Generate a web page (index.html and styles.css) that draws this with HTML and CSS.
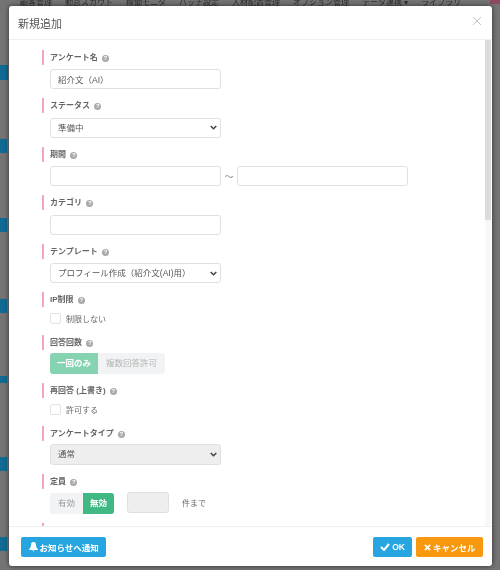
FILE: index.html
```html
<!doctype html>
<html>
<head>
    <meta charset="UTF-8">
    <title>新規追加</title>
    <link rel="stylesheet" href="styles.css">
</head>
<body>
<div class="page">
    <div class="nav">
        <span>顧客管理</span><span>勤怠スカウト</span><span>稼働モニタ</span><span>バッチ設定</span><span>人材配置管理</span><span>オプション管理</span><span>データ連携 ▾</span><span>ライブラリ</span>
    </div>
    <i class="tab"></i>
    <i class="bit bit-big"></i>
    <i class="bit bit-2"></i>
    <i class="bit bit-3"></i>
    <i class="bit bit-4"></i>
    <i class="bit bit-5"></i>
    <i class="bit bit-6"></i>
    <i class="bit bit-7"></i>
    <div class="modal">
        <div class="modal-head">
            <h4>新規追加</h4>
            <svg class="close" width="10" height="10" viewBox="0 0 10 10"><path d="M1 1l8 8M9 1l-8 8"/></svg>
        </div>
        <div class="modal-body">
            <form class="form">
                <div class="field">
                    <div class="label">アンケート名 <i class="help">?</i></div>
                    <input class="input" type="text" value="紹介文（AI）">
                </div>
                <div class="field">
                    <div class="label">ステータス <i class="help">?</i></div>
                    <select class="input"><option>準備中</option></select>
                </div>
                <div class="field">
                    <div class="label">期間 <i class="help">?</i></div>
                    <div class="range">
                        <input class="input" type="text">
                        <span class="tilde">～</span>
                        <input class="input" type="text">
                    </div>
                </div>
                <div class="field">
                    <div class="label">カテゴリ <i class="help">?</i></div>
                    <input class="input" type="text">
                </div>
                <div class="field">
                    <div class="label">テンプレート <i class="help">?</i></div>
                    <select class="input"><option>プロフィール作成（紹介文(AI)用）</option></select>
                </div>
                <div class="field">
                    <div class="label">IP制限 <i class="help">?</i></div>
                    <label class="check"><span class="box"></span>制限しない</label>
                </div>
                <div class="field">
                    <div class="label">回答回数 <i class="help">?</i></div>
                    <div class="toggle faded">
                        <span class="on">一回のみ</span><span>複数回答許可</span>
                    </div>
                </div>
                <div class="field">
                    <div class="label">再回答 (上書き) <i class="help">?</i></div>
                    <label class="check"><span class="box"></span>許可する</label>
                </div>
                <div class="field">
                    <div class="label">アンケートタイプ <i class="help">?</i></div>
                    <select class="input locked"><option>通常</option></select>
                </div>
                <div class="field">
                    <div class="label">定員 <i class="help">?</i></div>
                    <div class="limit">
                        <div class="toggle">
                            <span>有効</span><span class="on">無効</span>
                        </div>
                        <input class="input count locked" type="text">
                        <span class="unit">件まで</span>
                    </div>
                </div>
                <div class="field">
                    <div class="label"></div>
                </div>
            </form>
            <div class="scrollbar"></div>
        </div>
        <div class="modal-foot">
            <button class="btn blue" type="button">
                <svg width="9" height="10" viewBox="0 0 9 10"><path d="M4.5 0C2.8 0 2 1.300 2 3c0 2.500-1.300 3.500-2 4.300v.7h9v-.7C8.300 6.500 7 5.500 7 3 7 1.300 6.200 0 4.500 0zM3.300 8.600a1.300 1.300 0 0 0 2.400 0z"/></svg>
                お知らせへ通知
            </button>
            <div class="foot-right">
                <button class="btn blue" type="button">
                    <svg width="10" height="8" viewBox="0 0 10 8"><path class="tick" d="M1 4l3 3 5-6"/></svg>
                    OK
                </button>
                <button class="btn orange" type="button">
                    <svg width="7" height="7" viewBox="0 0 8 8"><path class="tick" d="M1 1l6 6M7 1L1 7"/></svg>
                    キャンセル
                </button>
            </div>
        </div>
    </div>
</div>
</body>
</html>
```

FILE: styles.css
```css
* {
    box-sizing: border-box;
}

html, body {
    margin: 0;
    height: 570px;
    overflow: hidden;
}

body {
    background: #747474;
    font-family: "Liberation Sans", "Noto Sans CJK JP", sans-serif;
    font-size: 8px;
    color: #555;
}

.page {
    position: relative;
    height: 570px;
    padding-left: 9px;
    overflow: hidden;
    filter: blur(.5px);
}

.nav {
    height: 6px;
    overflow: hidden;
    display: flex;
    gap: 13px;
    padding-left: 11px;
    color: #2e2e2e;
    font-size: 8px;
    line-height: 5px;
    white-space: nowrap;
}

/* page behind the dialog */
.tab {
    position: absolute;
    top: 0;
    right: 0;
    width: 10px;
    height: 4px;
    background: #8a4a62;
}

.bit {
    position: absolute;
    left: 0;
    width: 7px;
    height: 14px;
    background: #0f6a94;
}

.bit-big { top: 65px; height: 15px; width: 8px; }
.bit-2 { top: 139px; }
.bit-3 { top: 218px; }
.bit-4 { top: 299px; }
.bit-5 { top: 376px; height: 7px; }
.bit-6 { top: 457px; }
.bit-7 { top: 537px; }

.modal {
    position: relative;
    width: 483px;
    height: 560px;
    background: #fff;
    border-radius: 3px;
    box-shadow: 0 0 5px rgba(0, 0, 0, .6);
    display: flex;
    flex-direction: column;
}

.modal-head {
    flex: none;
    height: 34px;
    border-bottom: 1px solid #f0f0f0;
    display: flex;
    align-items: center;
    justify-content: space-between;
    padding: 0 10px 0 9px;
}

.modal-head h4 {
    margin: 0;
    font-size: 11px;
    font-weight: 400;
    color: #555;
}

.close {
    fill: none;
    stroke: #c4c4c4;
    stroke-width: 1;
    margin-bottom: 3px;
}

.modal-body {
    flex: 1;
    min-height: 0;
    overflow: hidden;
    display: flex;
    justify-content: space-between;
}

.form {
    padding: 9.500px 0 0 33px;
}

.field {
    margin-bottom: 9px;
}

.label {
    height: 15px;
    border-left: 2px solid #f4a6c0;
    padding-left: 6px;
    margin-bottom: 4.500px;
    font-size: 8px;
    font-weight: 700;
    line-height: 15px;
    color: #666;
}

.help {
    display: inline-block;
    width: 7px;
    height: 7px;
    margin-left: 2px;
    border-radius: 50%;
    background: #a9a9a9;
    color: #fff;
    font-size: 6px;
    font-style: normal;
    line-height: 7px;
    text-align: center;
    vertical-align: 0;
}

.input {
    display: block;
    width: 171px;
    height: 20px;
    margin-left: 8px;
    padding: 0 7px;
    border: 1px solid #e0e0e0;
    border-radius: 3px;
    background-color: #fff;
    font-family: inherit;
    font-size: 8.500px;
    color: #555;
}

select.input {
    -webkit-appearance: none;
    appearance: none;
    background-image: url("data:image/svg+xml,%3Csvg xmlns='http://www.w3.org/2000/svg' width='7' height='5' viewBox='0 0 7 5'%3E%3Cpath d='M.7 1l2.800 2.800L6.300 1' fill='none' stroke='%23444' stroke-width='1.500'/%3E%3C/svg%3E");
    background-repeat: no-repeat;
    background-position: right 3.500px center;
}

.input.locked {
    background-color: #eee;
}

select.locked {
    height: 21px;
    margin-top: -1.500px;
}

.range {
    display: flex;
    align-items: center;
}

.tilde {
    width: 16px;
    margin-left: 0;
    text-align: center;
    font-size: 9px;
    color: #888;
}

.tilde + .input {
    margin-left: 0;
}

.check {
    display: flex;
    align-items: center;
    height: 14px;
    margin-left: 8px;
    gap: 5px;
    color: #666;
}

.box {
    width: 11px;
    height: 11px;
    border: 1px solid #e2e2e2;
    border-radius: 2px;
}

.toggle {
    display: inline-flex;
    vertical-align: top;
    margin-left: 8px;
    height: 21px;
    border-radius: 3px;
    overflow: hidden;
    background: #f1f3f4;
    color: #999;
    font-size: 8.500px;
}

.toggle span {
    padding: 0 8px;
    line-height: 21px;
}

.toggle .on {
    padding: 0 7px;
    background: #3fb884;
    color: #fff;
    font-weight: 700;
}

.faded {
    display: flex;
    width: max-content;
    margin-top: -1px;
}

.faded .on {
    background: #86d3b2;
}

.faded span:last-child {
    color: #b5b5b5;
}

.limit {
    display: flex;
    align-items: flex-start;
}

.input.count {
    width: 42px;
    height: 21px;
    margin: -1px 0 0 13px;
}

.unit {
    margin-left: 13px;
    line-height: 21px;
    color: #666;
}

.scrollbar {
    flex: none;
    width: 6px;
    margin-right: 1px;
    background-color: #f8f8f8;
    background-image: linear-gradient(#dcdcdc, #dcdcdc);
    background-size: 100% 180px;
    background-repeat: no-repeat;
}

.modal-foot {
    flex: none;
    height: 40px;
    border-top: 1px solid #f0f0f0;
    display: flex;
    align-items: center;
    justify-content: space-between;
    padding: 1px 9px 0 12px;
}

.foot-right {
    display: flex;
    gap: 4px;
}

.btn {
    display: inline-flex;
    align-items: center;
    gap: 2px;
    height: 20px;
    padding: 0 7.500px;
    border: 0;
    border-radius: 2px;
    font-family: inherit;
    font-size: 8.500px;
    font-weight: 700;
    color: #fff;
}

.btn svg {
    fill: #fff;
}

.btn .tick {
    fill: none;
    stroke: #fff;
    stroke-width: 2;
}

.blue {
    background: #27a5e0;
}

.orange {
    background: #f7980f;
}
```
